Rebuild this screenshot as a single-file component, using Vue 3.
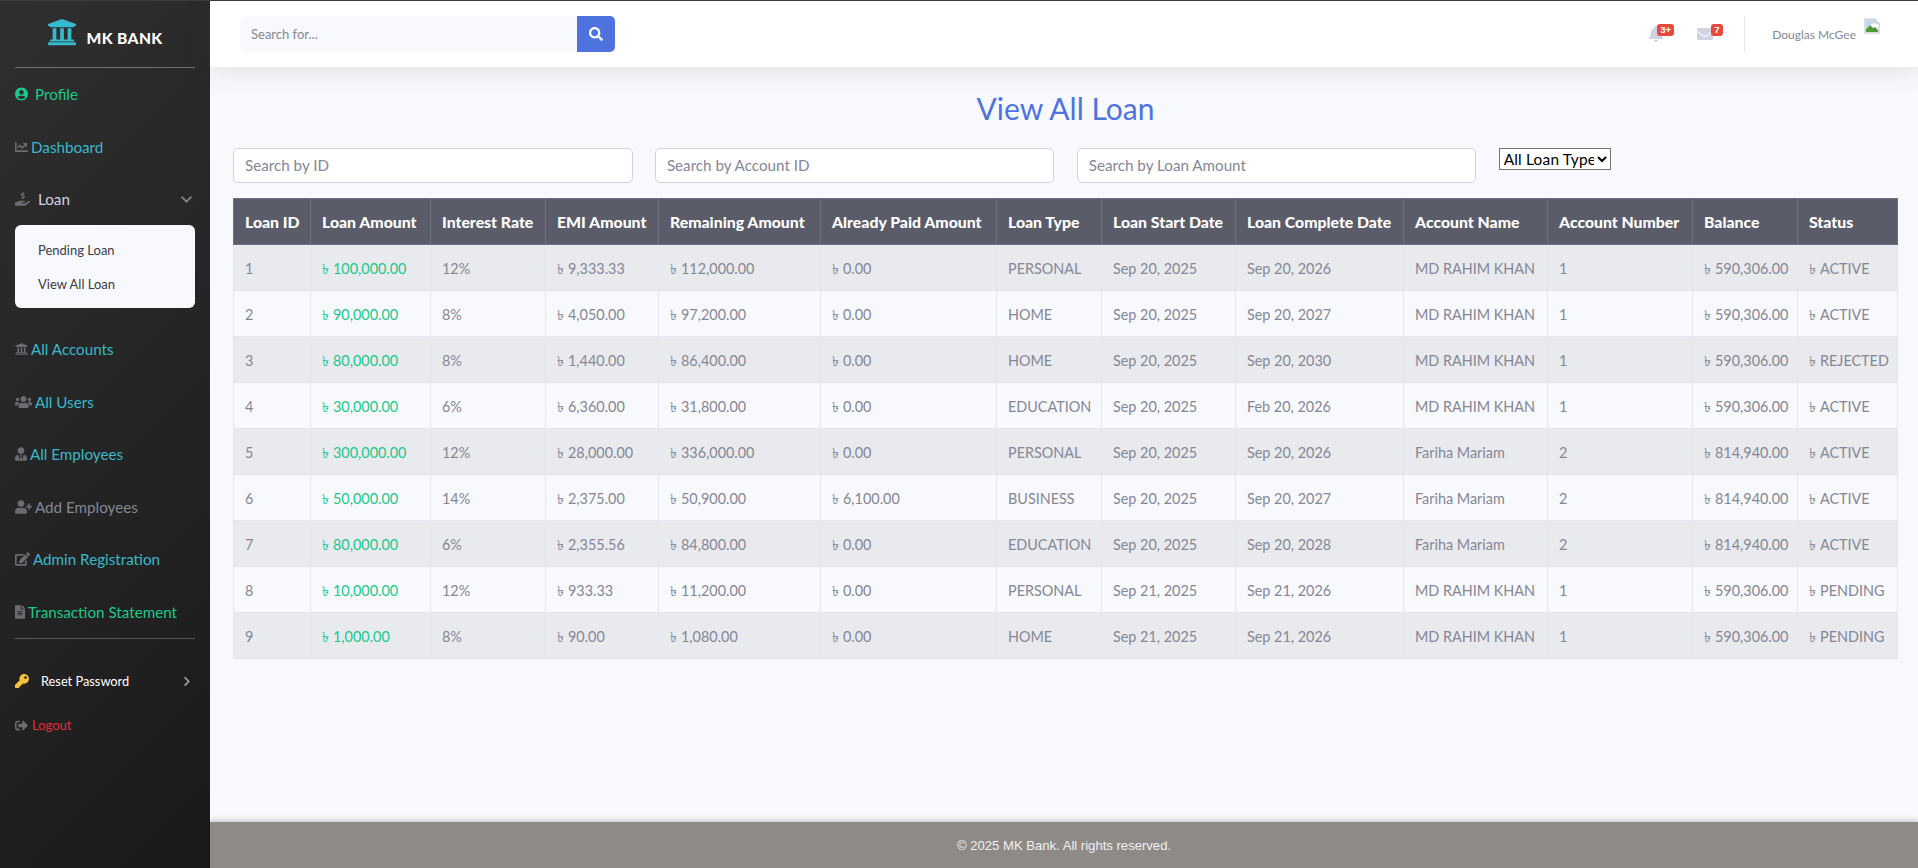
<script setup>
const P = {
  circle: ['0 0 496 512', 'M248 8C111 8 0 119 0 256s111 248 248 248 248-111 248-248S385 8 248 8zm0 96c48.6 0 88 39.4 88 88s-39.4 88-88 88-88-39.4-88-88 39.4-88 88-88zm0 344c-58.7 0-111.3-26.6-146.5-68.2 18.8-35.4 55.6-59.8 98.5-59.8 2.4 0 4.8.4 7.1 1.1 13 4.2 26.6 6.9 40.9 6.9 14.3 0 28-2.7 40.9-6.9 2.3-.7 4.7-1.1 7.1-1.1 42.9 0 79.7 24.4 98.5 59.8C359.3 421.4 306.7 448 248 448z'],
  search: ['0 0 512 512', 'M505 442.7L405.3 343c-4.5-4.5-10.6-7-17-7H372c27.6-35.3 44-79.7 44-128C416 93.1 322.9 0 208 0S0 93.1 0 208s93.1 208 208 208c48.3 0 92.7-16.4 128-44v16.3c0 6.4 2.5 12.5 7 17l99.7 99.7c9.4 9.4 24.6 9.4 33.9 0l28.3-28.3c9.4-9.4 9.4-24.6.1-34zM208 336c-70.7 0-128-57.2-128-128 0-70.7 57.2-128 128-128 70.7 0 128 57.2 128 128 0 70.7-57.2 128-128 128z'],
  bank: ['0 0 512 512', 'M496 128v16a8 8 0 0 1-8 8h-24v12c0 6.627-5.373 12-12 12H60c-6.627 0-12-5.373-12-12v-12H24a8 8 0 0 1-8-8v-16a8 8 0 0 1 4.941-7.392l232-88a7.996 7.996 0 0 1 6.118 0l232 88A8 8 0 0 1 496 128zm-24 304H40c-13.255 0-24 10.745-24 24v16a8 8 0 0 0 8 8h464a8 8 0 0 0 8-8v-16c0-13.255-10.745-24-24-24zM96 192v192H60c-6.627 0-12 5.373-12 12v20h416v-20c0-6.627-5.373-12-12-12h-36V192h-64v192h-64V192h-64v192h-64V192H96z'],
  down: ['0 0 448 512', 'M207.029 381.476L12.686 187.132c-9.373-9.373-9.373-24.569 0-33.941l22.667-22.667c9.357-9.357 24.522-9.375 33.901-.04L224 284.505l154.745-154.021c9.379-9.335 24.544-9.317 33.901.04l22.667 22.667c9.373 9.373 9.373 24.569 0 33.941L240.971 381.476c-9.373 9.372-24.569 9.372-33.942 0z'],
  right: ['0 0 320 512', 'M285.476 272.971L91.132 467.314c-9.373 9.373-24.569 9.373-33.941 0l-22.667-22.667c-9.357-9.357-9.375-24.522-.04-33.901L188.505 256 34.484 101.255c-9.335-9.379-9.317-24.544.04-33.901l22.667-22.667c9.373-9.373 24.569-9.373 33.941 0L285.475 239.03c9.373 9.372 9.373 24.568.001 33.941z'],
  key: ['0 0 512 512', 'M512 176.001C512 273.203 433.202 352 336 352c-11.22 0-22.19-1.062-32.827-3.069l-24.012 27.014A23.999 23.999 0 0 1 261.223 384H224v40c0 13.255-10.745 24-24 24h-40v40c0 13.255-10.745 24-24 24H24c-13.255 0-24-10.745-24-24v-78.059c0-6.365 2.529-12.47 7.029-16.971l161.802-161.802C163.108 213.814 160 195.271 160 176 160 78.798 238.797.001 335.999 0 433.488-.001 512 78.511 512 176.001zM336 128c0 26.51 21.49 48 48 48s48-21.49 48-48-21.49-48-48-48-48 21.49-48 48z'],
  chart: ['0 0 512 512', 'M496 384H64V80c0-8.84-7.16-16-16-16H16C7.16 64 0 71.16 0 80v336c0 17.67 14.33 32 32 32h464c8.84 0 16-7.16 16-16v-32c0-8.84-7.16-16-16-16zM464 96H345.94c-21.38 0-32.09 25.85-16.97 40.97l32.4 32.4L288 242.75l-73.37-73.37c-12.5-12.5-32.76-12.5-45.25 0l-68.69 68.69c-6.25 6.25-6.25 16.38 0 22.63l22.62 22.62c6.25 6.25 16.38 6.25 22.63 0L192 237.25l73.37 73.37c12.5 12.5 32.76 12.5 45.25 0l96-96 32.4 32.4c15.12 15.12 40.97 4.41 40.97-16.97V112c.01-8.84-7.15-16-15.99-16z'],
  file: ['0 0 384 512', 'M224 136V0H24C10.7 0 0 10.7 0 24v464c0 13.3 10.7 24 24 24h336c13.3 0 24-10.7 24-24V160H248c-13.2 0-24-10.8-24-24zm64 236c0 6.6-5.4 12-12 12H108c-6.6 0-12-5.4-12-12v-8c0-6.6 5.4-12 12-12h168c6.6 0 12 5.4 12 12v8zm0-64c0 6.6-5.4 12-12 12H108c-6.6 0-12-5.4-12-12v-8c0-6.6 5.4-12 12-12h168c6.6 0 12 5.4 12 12v8zm0-72v8c0 6.6-5.4 12-12 12H108c-6.6 0-12-5.4-12-12v-8c0-6.6 5.4-12 12-12h168c6.6 0 12 5.4 12 12zm96-114.1v6.1H256V0h6.1c6.4 0 12.5 2.5 17 7l97.9 98c4.5 4.5 7 10.6 7 16.9z'],
  users: ['0 0 640 512', 'M96 224c35.3 0 64-28.7 64-64s-28.7-64-64-64-64 28.7-64 64 28.7 64 64 64zm448 0c35.3 0 64-28.7 64-64s-28.7-64-64-64-64 28.7-64 64 28.7 64 64 64zm32 32h-64c-17.6 0-33.5 7.1-45.1 18.6 40.3 22.1 68.9 62 75.1 109.4h66c17.7 0 32-14.3 32-32v-32c0-35.3-28.7-64-64-64zm-256 0c61.9 0 112-50.1 112-112S381.9 32 320 32 208 82.1 208 144s50.1 112 112 112zm76.8 32h-8.3c-20.8 10-43.9 16-68.5 16s-47.6-6-68.5-16h-8.3C179.6 288 128 339.6 128 403.2V432c0 26.5 21.5 48 48 48h288c26.5 0 48-21.5 48-48v-28.8c0-63.6-51.6-115.2-115.2-115.2zm-223.7-13.4C161.5 263.1 145.6 256 128 256H64c-35.3 0-64 28.7-64 64v32c0 17.7 14.3 32 32 32h65.9c6.3-47.4 34.9-87.3 75.2-109.4z'],
  tie: ['0 0 448 512', 'M224 256c70.7 0 128-57.3 128-128S294.7 0 224 0 96 57.3 96 128s57.3 128 128 128zm95.8 32.6L272 480l-32-136 32-56h-96l32 56-32 136-47.8-191.4C56.9 292 0 350.3 0 422.4V464c0 26.5 21.5 48 48 48h352c26.5 0 48-21.5 48-48v-41.6c0-72.1-56.9-130.4-128.2-133.8z'],
  plus: ['0 0 640 512', 'M624 208h-64v-64c0-8.8-7.2-16-16-16h-32c-8.8 0-16 7.2-16 16v64h-64c-8.8 0-16 7.2-16 16v32c0 8.8 7.2 16 16 16h64v64c0 8.8 7.2 16 16 16h32c8.8 0 16-7.2 16-16v-64h64c8.8 0 16-7.2 16-16v-32c0-8.8-7.2-16-16-16zm-400 48c70.7 0 128-57.3 128-128S294.7 0 224 0 96 57.3 96 128s57.3 128 128 128zm89.6 32h-16.7c-22.2 10.2-46.9 16-72.9 16s-50.6-5.8-72.9-16h-16.7C60.2 288 0 348.2 0 422.4V464c0 26.5 21.5 48 48 48h352c26.5 0 48-21.5 48-48v-41.6c0-74.2-60.2-134.4-134.4-134.4z'],
  edit: ['0 0 576 512', 'M402.6 83.2l90.2 90.2c3.8 3.8 3.8 10 0 13.8L274.4 405.6l-92.8 10.3c-12.4 1.4-22.9-9.1-21.5-21.5l10.3-92.8L388.8 83.2c3.8-3.8 10-3.8 13.8 0zm162-22.9l-48.8-48.8c-15.2-15.2-39.9-15.2-55.2 0l-35.4 35.4c-3.8 3.8-3.8 10 0 13.8l90.2 90.2c3.8 3.8 10 3.8 13.8 0l35.4-35.4c15.2-15.3 15.2-40 0-55.2zM384 346.2V448H64V128h229.8c3.2 0 6.2-1.3 8.5-3.5l40-40c7.6-7.6 2.2-20.5-8.5-20.5H48C21.5 64 0 85.5 0 112v352c0 26.5 21.5 48 48 48h352c26.5 0 48-21.5 48-48V306.2c0-10.7-12.9-16-20.5-8.5l-40 40c-2.2 2.3-3.5 5.3-3.5 8.5z'],
  out: ['0 0 512 512', 'M497 273L329 441c-15 15-41 4.5-41-17v-96H152c-13.3 0-24-10.7-24-24v-96c0-13.3 10.7-24 24-24h136V88c0-21.4 25.9-32 41-17l168 168c9.3 9.4 9.3 24.6 0 34zM192 436v-40c0-6.6-5.4-12-12-12H96c-17.7 0-32-14.3-32-32V160c0-17.7 14.3-32 32-32h84c6.6 0 12-5.4 12-12V76c0-6.6-5.4-12-12-12H96c-53 0-96 43-96 96v192c0 53 43 96 96 96h84c6.6 0 12-5.4 12-12z'],
  hand: ['0 0 576 512', 'M271.06,144.3l54.27,14.3a8.59,8.59,0,0,1,6.63,8.1c0,4.6-4.09,8.4-9.12,8.4h-35.6a30,30,0,0,1-11.19-2.2c-5.24-2.2-11.28-1.7-15.3,2l-19,17.5a11.68,11.68,0,0,0-2.25,2.66,11.42,11.42,0,0,0,3.88,15.74,83.77,83.77,0,0,0,34.51,11.5V240c0,8.8,7.83,16,17.37,16h17.37c9.55,0,17.38-7.2,17.38-16V222.4c32.93-3.6,57.84-31,53.5-63-3.15-23-22.46-41.3-46.56-47.7L282.68,97.4a8.59,8.59,0,0,1-6.63-8.1c0-4.6,4.09-8.4,9.12-8.4h35.6A30,30,0,0,1,332,83.1c5.23,2.2,11.28,1.7,15.3-2l19-17.5A11.31,11.31,0,0,0,368.47,61a11.42,11.42,0,0,0-3.84-15.78,83.82,83.82,0,0,0-34.52-11.5V16c0-8.8-7.82-16-17.37-16H295.37C285.82,0,278,7.2,278,16V33.6c-32.89,3.6-57.85,31-53.51,63C227.63,119.6,247,137.9,271.06,144.3ZM565.27,328.1c-11.8-10.7-30.2-10-42.6,0L430.27,402a63.64,63.64,0,0,1-40,14H272a16,16,0,0,1,0-32h78.29c15.9,0,30.71-10.9,33.25-26.6a31.2,31.2,0,0,0,.46-5.46A32,32,0,0,0,352,320H192a117.66,117.66,0,0,0-74.1,26.29L71.4,384H16A16,16,0,0,0,0,400v96a16,16,0,0,0,16,16H372.77a64,64,0,0,0,40-14L564,377a32,32,0,0,0,1.28-48.9Z'],
  bell: ['0 0 448 512', 'M224 512c35.32 0 63.97-28.65 63.97-64H160.03c0 35.35 28.65 64 63.97 64zm215.39-149.71c-19.32-20.76-55.47-51.99-55.47-154.29 0-77.7-54.48-139.9-127.94-155.16V32c0-17.67-14.32-32-31.98-32s-31.98 14.33-31.98 32v20.84C118.56 68.1 64.08 130.3 64.08 208c0 102.3-36.15 133.53-55.47 154.29-6 6.45-8.66 14.16-8.61 21.71.11 16.4 12.98 32 32.1 32h383.8c19.12 0 32-15.6 32.1-32 .05-7.55-2.61-15.27-8.61-21.71z'],
  mail: ['0 0 512 512', 'M502.3 190.8c3.9-3.1 9.7-.2 9.7 4.7V400c0 26.5-21.5 48-48 48H48c-26.5 0-48-21.5-48-48V195.6c0-5 5.7-7.8 9.7-4.7 22.4 17.4 52.1 39.5 154.1 113.6 21.1 15.4 56.7 47.8 92.2 47.6 35.7.3 72-32.8 92.3-47.6 102-74.1 131.6-96.3 154-113.7zM256 320c23.2.4 56.6-29.2 73.4-41.4 132.7-96.3 142.8-104.7 173.4-128.7 5.8-4.5 9.2-11.5 9.2-18.9v-19c0-26.5-21.5-48-48-48H48C21.5 64 0 85.5 0 112v19c0 7.4 3.4 14.3 9.2 18.9 30.6 23.9 40.7 32.4 173.4 128.7 16.8 12.2 50.2 41.8 73.4 41.4z'],
}
const navTop = [
  { label: 'Profile', icon: P.circle, cls: 'green', w: 13, gap: 7, iconCls: 'ig' },
  { label: 'Dashboard', icon: P.chart, cls: 'cyan', w: 13, gap: 3 },
]
const navBottom = [
  { label: 'All Accounts', icon: P.bank, cls: 'cyan', w: 13, gap: 3 },
  { label: 'All Users', icon: P.users, cls: 'cyan', w: 17, gap: 3 },
  { label: 'All Employees', icon: P.tie, cls: 'cyan', w: 12, gap: 3 },
  { label: 'Add Employees', icon: P.plus, cls: 'muted', w: 17, gap: 3 },
  { label: 'Admin Registration', icon: P.edit, cls: 'cyan', w: 15, gap: 3 },
  { label: 'Transaction Statement', icon: P.file, cls: 'green2', w: 10, gap: 3 },
]
const cols = [
  ['Loan ID', 77], ['Loan Amount', 120], ['Interest Rate', 115], ['EMI Amount', 113], ['Remaining Amount', 162],
  ['Already Paid Amount', 176], ['Loan Type', 105], ['Loan Start Date', 134], ['Loan Complete Date', 168],
  ['Account Name', 144], ['Account Number', 145], ['Balance', 105], ['Status', 100],
]
const R = 'MD RAHIM KHAN', F = 'Fariha Mariam', B1 = '590,306.00', B2 = '814,940.00'
const rows = [
  [1, '100,000.00', '12%', '9,333.33', '112,000.00', '0.00', 'PERSONAL', 'Sep 20, 2025', 'Sep 20, 2026', R, 1, B1, 'ACTIVE'],
  [2, '90,000.00', '8%', '4,050.00', '97,200.00', '0.00', 'HOME', 'Sep 20, 2025', 'Sep 20, 2027', R, 1, B1, 'ACTIVE'],
  [3, '80,000.00', '8%', '1,440.00', '86,400.00', '0.00', 'HOME', 'Sep 20, 2025', 'Sep 20, 2030', R, 1, B1, 'REJECTED'],
  [4, '30,000.00', '6%', '6,360.00', '31,800.00', '0.00', 'EDUCATION', 'Sep 20, 2025', 'Feb 20, 2026', R, 1, B1, 'ACTIVE'],
  [5, '300,000.00', '12%', '28,000.00', '336,000.00', '0.00', 'PERSONAL', 'Sep 20, 2025', 'Sep 20, 2026', F, 2, B2, 'ACTIVE'],
  [6, '50,000.00', '14%', '2,375.00', '50,900.00', '6,100.00', 'BUSINESS', 'Sep 20, 2025', 'Sep 20, 2027', F, 2, B2, 'ACTIVE'],
  [7, '80,000.00', '6%', '2,355.56', '84,800.00', '0.00', 'EDUCATION', 'Sep 20, 2025', 'Sep 20, 2028', F, 2, B2, 'ACTIVE'],
  [8, '10,000.00', '12%', '933.33', '11,200.00', '0.00', 'PERSONAL', 'Sep 21, 2025', 'Sep 21, 2026', R, 1, B1, 'PENDING'],
  [9, '1,000.00', '8%', '90.00', '1,080.00', '0.00', 'HOME', 'Sep 21, 2025', 'Sep 21, 2026', R, 1, B1, 'PENDING'],
]
const taka = new Set([1, 3, 4, 5, 11, 12])
</script>

<template>
  <div class="app">
    <aside class="sidebar">
      <div class="brand">
        <svg class="brand-icon" :viewBox="P.bank[0]"><path :d="P.bank[1]" /></svg>
        <span>MK BANK</span>
      </div>
      <hr class="rule" />
      <a v-for="n in navTop" :key="n.label" class="nav" :class="n.cls">
        <svg class="ico" :class="n.iconCls" :viewBox="n.icon[0]" :style="{ width: n.w + 'px', marginRight: n.gap + 'px' }"><path :d="n.icon[1]" /></svg>{{ n.label }}
      </a>
      <a class="nav loan">
        <svg class="ico" :viewBox="P.hand[0]" :style="{ width: '15px', marginRight: '8px' }"><path :d="P.hand[1]" /></svg>Loan
        <svg class="chev" :viewBox="P.down[0]"><path :d="P.down[1]" /></svg>
      </a>
      <div class="submenu">
        <a>Pending Loan</a>
        <a>View All Loan</a>
      </div>
      <a v-for="n in navBottom" :key="n.label" class="nav" :class="n.cls">
        <svg class="ico" :viewBox="n.icon[0]" :style="{ width: n.w + 'px', marginRight: n.gap + 'px' }"><path :d="n.icon[1]" /></svg>{{ n.label }}
      </a>
      <hr class="rule rule2" />
      <a class="small reset">
        <svg class="key" :viewBox="P.key[0]"><path :d="P.key[1]" /></svg>Reset Password
        <svg class="chev-r" :viewBox="P.right[0]"><path :d="P.right[1]" /></svg>
      </a>
      <a class="small logout">
        <svg class="ico out" :viewBox="P.out[0]"><path :d="P.out[1]" /></svg>Logout
      </a>
    </aside>

    <div class="main">
      <header class="topbar">
        <div class="search">
          <input placeholder="Search for..." />
          <button><svg :viewBox="P.search[0]"><path :d="P.search[1]" /></svg></button>
        </div>
        <div class="top-right">
          <span class="alert bell">
            <svg :viewBox="P.bell[0]"><path :d="P.bell[1]" /></svg>
            <b class="badge">3+</b>
          </span>
          <span class="alert mail">
            <svg :viewBox="P.mail[0]"><path :d="P.mail[1]" /></svg>
            <b class="badge">7</b>
          </span>
          <span class="vr"></span>
          <span class="uname">Douglas McGee</span>
          <svg class="broken" viewBox="0 0 16 16">
            <path d="M1 1h10l4 4v10H1z" fill="#fff" stroke="#b9bcc4" />
            <path d="M11 1v4h4" fill="#e8eaee" stroke="#b9bcc4" />
            <path d="M2 14v-3l4-4 3 3 2-1 3 3v2z" fill="#4c9a3c" />
            <path d="M2 2h8v3l-4 2-4 3z" fill="#c3d6f2" />
          </svg>
        </div>
      </header>

      <main class="content">
        <h1>View All Loan</h1>
        <div class="filters">
          <input placeholder="Search by ID" />
          <input placeholder="Search by Account ID" />
          <input placeholder="Search by Loan Amount" />
          <select><option>All Loan Type</option></select>
        </div>
        <table>
          <colgroup><col v-for="c in cols" :key="c[0]" :style="{ width: c[1] + 'px' }" /></colgroup>
          <thead>
            <tr><th v-for="c in cols" :key="c[0]">{{ c[0] }}</th></tr>
          </thead>
          <tbody>
            <tr v-for="r in rows" :key="r[0]">
              <td v-for="(v, i) in r" :key="i" :class="{ amount: i === 1 }"><span v-if="taka.has(i)" class="tk">৳</span>{{ v }}</td>
            </tr>
          </tbody>
        </table>
      </main>

      <footer class="footer">© 2025 MK Bank. All rights reserved.</footer>
    </div>
  </div>
</template>

<style>
html, body { margin: 0; padding: 0; }
</style>

<style scoped>
.app {
  display: flex;
  width: 1918px;
  height: 868px;
  box-sizing: border-box;
  border-top: 1px solid #3c3c3c;
  overflow: hidden;
  font-family: Lato, "Noto Sans", sans-serif;
  background: #f8f9fc;
}
.sidebar {
  width: 210px;
  flex: none;
  box-sizing: border-box;
  padding: 0 15px;
  background: linear-gradient(135deg, #2f2f2f 0%, #1a1a1a 100%);
}
.brand {
  height: 66px;
  display: flex;
  align-items: center;
  justify-content: center;
  gap: 9px;
  color: #fff;
  font-weight: 900;
  font-size: 15.6px;
  letter-spacing: .4px;
  box-sizing: border-box;
}
.brand span { margin-top: 7px; }
.brand-icon { width: 30px; height: 32px; fill: #36b9cc; margin-bottom: 4px; }
.rule { margin: 0; border: 0; height: 1px; background: rgba(255, 255, 255, .33); }
.rule2 { background: rgba(255, 255, 255, .25); }
.nav {
  display: flex;
  align-items: center;
  height: 52.6px;
  font-size: 15.2px;
  white-space: nowrap;
}
.ico { height: 14px; fill: #6b6c72; flex: none; }
.ig { fill: #1cc88a; }
.green { color: #1cc88a; }
.green2 { color: #1cc88a; }
.cyan { color: #36b9cc; }
.muted { color: #858796; }
.loan { color: #d1d3e2; position: relative; }
.loan .ico { height: 16px; }
.chev { width: 11px; height: 13px; margin-left: auto; margin-right: 3px; fill: #80828a; }
.submenu {
  margin-top: -1px;
  margin-bottom: 15px;
  height: 83px;
  box-sizing: border-box;
  padding: 8px 0 0 23px;
  background: #f8f9fc;
  border-radius: 6px;
  color: #3a3b45;
  font-size: 13px;
}
.submenu a { display: block; height: 34px; line-height: 34px; }
.small { display: flex; align-items: center; white-space: nowrap; }
.reset { margin-top: 22px; height: 40px; color: #fff; font-size: 12.8px; }
.key { width: 14px; height: 14px; fill: #f6c23e; margin-right: 12px; flex: none; }
.chev-r { width: 8px; height: 11px; margin-left: auto; margin-right: 4px; fill: #9a9ca6; }
.logout { margin-top: 4px; height: 40px; color: #e02d3c; font-size: 13px; }
.out { width: 13px; height: 13px; margin-right: 4px; }

.main { flex: 1; min-width: 0; display: flex; flex-direction: column; }
.topbar {
  height: 66px;
  flex: none;
  display: flex;
  align-items: center;
  justify-content: space-between;
  background: #fff;
  box-shadow: 0 2px 28px rgba(58, 59, 69, .15);
  padding: 0 38px 0 30px;
  position: relative;
  box-sizing: border-box;
}
.search { display: flex; width: 375px; height: 36px; }
.search input {
  flex: 1;
  min-width: 0;
  border: 0;
  outline: 0;
  box-sizing: border-box;
  padding: 0 11px;
  background: #f8f9fc;
  border-radius: 5px 0 0 5px;
  font: 13px Lato, sans-serif;
}
.search input::placeholder { color: #858796; opacity: 1; }
.search button {
  width: 38px;
  border: 0;
  padding: 0;
  background: #4e73df;
  border-radius: 0 5px 5px 0;
  display: flex;
  align-items: center;
  justify-content: center;
}
.search button svg { width: 14px; height: 14px; fill: #fff; }
.top-right { display: flex; align-items: center; height: 36px; }
.alert { position: relative; display: block; height: 16px; }
.alert svg { display: block; height: 16px; fill: #d1d3e2; }
.bell { width: 14px; }
.bell svg { width: 14px; }
.mail { width: 16px; margin-left: 34px; }
.mail svg { width: 16px; }
.badge {
  position: absolute;
  top: -2px;
  background: #e74a3b;
  color: #fff;
  font-size: 9.6px;
  font-weight: 700;
  line-height: 12px;
  height: 12px;
  border-radius: 3px;
  padding: 0 3px;
  font-family: "Liberation Sans", sans-serif;
}
.bell .badge { left: 8px; }
.mail .badge { left: 14px; }
.vr { width: 1px; height: 36px; background: #e3e6f0; margin: 0 27px 0 31px; }
.uname { color: #858796; font-size: 12px; white-space: nowrap; }
.broken { width: 16px; height: 16px; margin-left: 8px; margin-bottom: 16px; }

.content { flex: 1; min-height: 0; padding: 0 20px 0 23px; }
h1 {
  margin: 22px 0 23px;
  height: 36px;
  line-height: 38px;
  text-align: center;
  color: #4e73df;
  font-size: 30px;
  font-weight: 400;
}
.filters { display: flex; gap: 22.3px; align-items: flex-start; margin-bottom: 15px; }
.filters input {
  width: 399.6px;
  height: 35px;
  flex: none;
  box-sizing: border-box;
  padding: 0 11px 1px;
  border: 1px solid #d1d3e2;
  border-radius: 5px;
  background: #fff;
  outline: 0;
  font: 15.2px Lato, sans-serif;
}
.filters input::placeholder { color: #858796; opacity: 1; }
.filters select {
  width: 112px;
  height: 22px;
  flex: none;
  font: 15.4px Lato, sans-serif;
  letter-spacing: .2px;
  color: #000;
  background: #fff;
  border: 1px solid #767676;
  padding: 0;
}
table {
  width: 1664px;
  table-layout: fixed;
  border-collapse: collapse;
  font-size: 14.4px;
  color: #858796;
}
th, td {
  box-sizing: border-box;
  height: 46px;
  padding: 0 11px;
  text-align: left;
  white-space: nowrap;
  overflow: hidden;
  border: 1px solid #e3e6f0;
}
td { padding-top: 1px; }
th {
  background: #5a5c69;
  color: #fff;
  font-size: 15.8px;
  font-weight: 900;
  border-color: #6e707e;
}
tbody tr:nth-child(odd) td { background: #e9eaee; }
.amount { color: #1cc88a; }
.tk { font-size: 14px; line-height: 0; display: inline-block; width: 11px; }
.footer {
  height: 46px;
  flex: none;
  display: flex;
  align-items: center;
  justify-content: center;
  background: #8e8a88;
  color: #f1f1f1;
  font: 13.1px "Liberation Sans", sans-serif;
  box-shadow: 0 -2px 5px rgba(0, 0, 0, .2);
}
</style>
